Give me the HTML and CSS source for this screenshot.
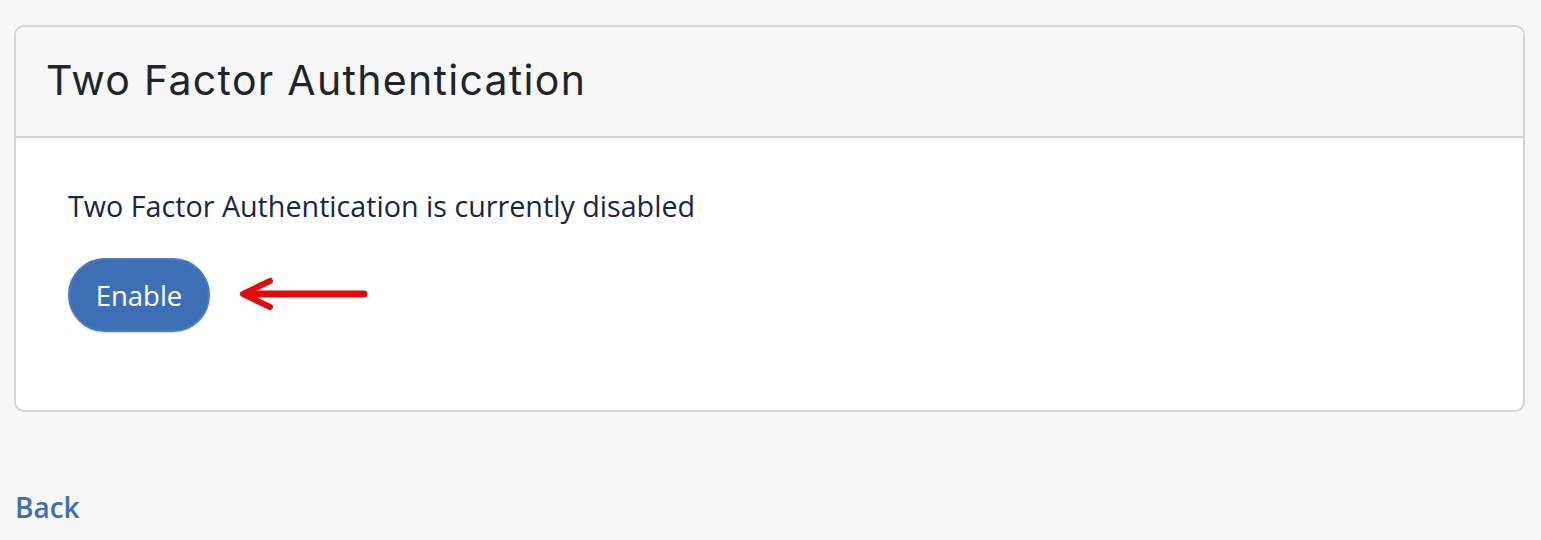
FILE: index.html
```html
<!DOCTYPE html>
<html>
<head>
<meta charset="utf-8">
<link rel="stylesheet" href="styles.css">
</head>
<body>
<div class="page">
  <div class="card">
    <div class="card-header">
      <h2 class="card-title">Two Factor Authentication</h2>
    </div>
    <div class="card-body">
      <p class="status">Two Factor Authentication is currently disabled</p>
      <div class="actions">
        <button class="btn-primary">Enable</button>
        <svg class="arrow" width="134" height="36" viewBox="0 0 134 36">
          <path d="M128 17 H10" stroke="#e00b0b" stroke-width="7" stroke-linecap="round" fill="none"/>
          <path d="M34 4 L7 17 L34 30" stroke="#e00b0b" stroke-width="6" stroke-linecap="round" stroke-linejoin="round" fill="none"/>
        </svg>
      </div>
    </div>
  </div>
  <a class="back" href="#">Back</a>
</div>
</body>
</html>
```
FILE: styles.css
```css
html, body {
  margin: 0;
  padding: 0;
  background: #f7f7f7;
}
.page {
  padding: 25px 16px 0 14px;
  font-family: "Open Sans", sans-serif;
}
.card {
  border: 2px solid #d4d4d4;
  border-radius: 10px;
  background: #fff;
  overflow: hidden;
}
.card-header {
  background: #f7f7f7;
  border-bottom: 2px solid #d4d4d4;
  height: 111px;
  box-sizing: border-box;
  display: flex;
  align-items: center;
  padding: 0 0 4px 30px;
}
.card-title {
  margin: 0;
  font-family: "Inter", sans-serif;
  font-weight: 400;
  font-size: 41px;
  letter-spacing: 1.3px;
  color: #212529;
}
.card-body {
  padding: 48px 52px 78px;
}
.status {
  margin: 0 0 32px;
  font-size: 28.7px;
  line-height: 40px;
  color: #1a2740;
}
.actions {
  display: flex;
  align-items: center;
  gap: 26px;
}
.btn-primary {
  font-family: "Open Sans", sans-serif;
  font-size: 27.5px;
  color: #fff;
  background: #3d6fb6;
  border: 2px solid #4a7bc0;
  border-radius: 40px;
  width: 142px;
  height: 74px;
  padding: 0;
  box-shadow: 0 1px 2px rgba(0,0,0,0.15);
}
.arrow {
  display: block;
}
.back {
  display: inline-block;
  margin-top: 76px;
  margin-left: 1px;
  color: #3d6fb6;
  font-weight: 600;
  font-size: 28px;
  text-decoration: none;
}
```
